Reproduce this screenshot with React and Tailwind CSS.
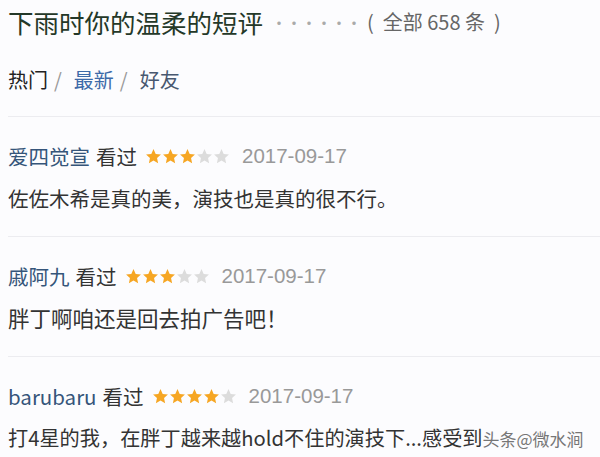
import React from 'react'

const reviews = [
    { name: '爱四觉宣', stars: 3, date: '2017-09-17', text: '佐佐木希是真的美，演技也是真的很不行。', size: 'text-[20.5px]' },
    { name: '戚阿九', stars: 3, date: '2017-09-17', text: '胖丁啊咱还是回去拍广告吧！', size: 'text-[21.5px]' },
    { name: 'barubaru', stars: 4, date: '2017-09-17', text: '打4星的我，在胖丁越来越hold不住的演技下...感受到', size: 'text-[20.2px]', mark: true },
]

function Star({ on }) {
    return (
        <svg width="17" height="17" viewBox="0 0 24 24">
            <polygon
                points="12,1.5 15.1,8.3 22.5,9.1 17,14.1 18.5,21.4 12,17.7 5.5,21.4 7,14.1 1.5,9.1 8.9,8.3"
                fill={on ? '#f6a623' : '#dcdcdc'}
            />
        </svg>
    )
}

function App() {
    return (
        <div className="w-[600px] h-[457px] overflow-hidden bg-[#fcfcfe] pl-2 font-['Microsoft_YaHei','Noto_Sans_CJK_SC',sans-serif]">
            <div className="h-[44px] flex items-center whitespace-nowrap">
                <span className="text-[25.5px] leading-none text-[#243828]">下雨时你的温柔的短评</span>
                <span className="flex ml-[8px] text-[16px] text-[#aaa]">
                    {[0, 1, 2, 3, 4, 5].map((d) => (
                        <span key={d} className="w-[15px] text-center">·</span>
                    ))}
                </span>
                <span className="ml-[6px] text-[20px] leading-none text-[#666] whitespace-pre">(  全部 658 条  )</span>
            </div>
            <div className="h-[72px] flex items-center text-[20px] leading-none">
                <span className="text-[#222]">热门</span>
                <span className="text-[#999] ml-[6px] mr-[12px]">/</span>
                <span className="text-[#3d6aa8]">最新</span>
                <span className="text-[#999] ml-[6px] mr-[12px]">/</span>
                <span className="text-[#485870]">好友</span>
            </div>
            {reviews.map((r, i) => (
                <div key={i} className="border-t border-[#ececf0] h-[120px] pt-[25px] text-[#333] whitespace-nowrap">
                    <div className="h-[28px] flex items-center text-[20.5px] leading-none">
                        <span className="text-[#35557a]">{r.name}</span>
                        <span className="ml-[6px]">看过</span>
                        <span className="flex ml-[8px] mr-[12px]">
                            {[0, 1, 2, 3, 4].map((s) => (
                                <Star key={s} on={s < r.stars} />
                            ))}
                        </span>
                        <span className="text-[#999] font-['Liberation_Sans',sans-serif]">{r.date}</span>
                    </div>
                    <div className={`mt-[14px] h-[28px] flex items-center leading-none ${r.size}`}>
                        <span className="text-[#333]">{r.text}</span>
                        {r.mark && <span className="text-[17px] text-[#555] opacity-80">头条@微水涧</span>}
                    </div>
                </div>
            ))}
        </div>
    )
}

export default App
